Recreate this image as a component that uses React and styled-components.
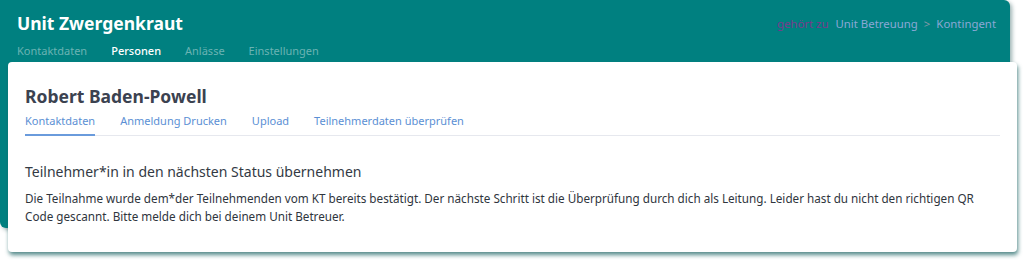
import React from "react";
import styled, { createGlobalStyle } from "styled-components";

const GlobalStyle = createGlobalStyle`
  body {
    margin: 0;
    background: #ffffff;
    font-family: "Noto Sans", "Open Sans", sans-serif;
  }
`;

const Stage = styled.div`
  display: grid;
  grid-template-columns: 8px 1002px 7px;
  grid-template-rows: 62px 166px 24px;
  padding-bottom: 8px;
`;

const UnitPanel = styled.header`
  grid-column: 1 / 3;
  grid-row: 1 / 3;
  background: #008080;
  border-radius: 0 6px 6px 6px;
  box-shadow: 2px 2px 4px rgba(0, 60, 60, 0.4);
  padding: 12px 14px 0 17px;
  display: flex;
  flex-direction: column;
  gap: 9px;
`;

const TopRow = styled.div`
  display: flex;
  align-items: center;
  justify-content: space-between;
`;

const UnitTitle = styled.h1`
  margin: 0;
  color: #ffffff;
  font-size: 17.5px;
  font-weight: 700;
  line-height: 22px;
`;

const Breadcrumb = styled.div`
  display: flex;
  align-items: center;
  gap: 6px;
  font-size: 11.4px;
  color: #8aa8d6;
`;

const Owner = styled.span`
  color: #7a3a8c;
  margin-right: 1px;
`;

const Sep = styled.span`
  color: #8a9aa8;
`;

const UnitTabs = styled.nav`
  display: flex;
  gap: 24px;
`;

const UnitTab = styled.span`
  font-size: 11px;
  line-height: 16px;
  color: ${(p) => (p.$active ? "#ffffff" : "#6ab3b3")};
  font-weight: ${(p) => (p.$active ? 500 : 400)};
`;

const Card = styled.section`
  grid-column: 2 / 4;
  grid-row: 2 / 4;
  background: #ffffff;
  border-radius: 4px;
  box-shadow: 1px 3px 4px rgba(30, 100, 100, 0.75);
  padding: 22px 17px 0 17px;
`;

const PersonName = styled.h2`
  margin: 0;
  color: #3b4250;
  font-size: 17.5px;
  font-weight: 700;
  line-height: 24px;
`;

const PersonTabs = styled.nav`
  display: flex;
  gap: 25px;
  margin-top: 5px;
  border-bottom: 1px solid #e6e8ee;
`;

const PersonTab = styled.span`
  font-size: 11px;
  line-height: 16px;
  color: #5b8fd4;
  padding-bottom: 5px;
  border-bottom: 2px solid ${(p) => (p.$active ? "#6a9bdc" : "transparent")};
  margin-bottom: -1px;
`;

const StatusTitle = styled.h3`
  margin: 26px 0 0;
  font-size: 14px;
  font-weight: 400;
  line-height: 20px;
  color: #333a44;
`;

const StatusText = styled.p`
  margin: 7px 0 0;
  font-size: 11.7px;
  line-height: 18px;
  color: #2f353d;
  max-width: 975px;
`;

const App = () => {
  const unitTabs = ["Kontaktdaten", "Personen", "Anlässe", "Einstellungen"];
  const personTabs = [
    "Kontaktdaten",
    "Anmeldung Drucken",
    "Upload",
    "Teilnehmerdaten überprüfen",
  ];

  return (
    <>
      <GlobalStyle />
      <Stage>
        <UnitPanel>
          <TopRow>
            <UnitTitle>Unit Zwergenkraut</UnitTitle>
            <Breadcrumb>
              <Owner>gehört zu</Owner>
              <span>Unit Betreuung</span>
              <Sep>&gt;</Sep>
              <span>Kontingent</span>
            </Breadcrumb>
          </TopRow>
          <UnitTabs>
            {unitTabs.map((t) => (
              <UnitTab key={t} $active={t === "Personen"}>
                {t}
              </UnitTab>
            ))}
          </UnitTabs>
        </UnitPanel>
        <Card>
          <PersonName>Robert Baden-Powell</PersonName>
          <PersonTabs>
            {personTabs.map((t, i) => (
              <PersonTab key={t} $active={i === 0}>
                {t}
              </PersonTab>
            ))}
          </PersonTabs>
          <StatusTitle>Teilnehmer*in in den nächsten Status übernehmen</StatusTitle>
          <StatusText>
            Die Teilnahme wurde dem*der Teilnehmenden vom KT bereits bestätigt. Der nächste
            Schritt ist die Überprüfung durch dich als Leitung. Leider hast du nicht den
            richtigen QR Code gescannt. Bitte melde dich bei deinem Unit Betreuer.
          </StatusText>
        </Card>
      </Stage>
    </>
  );
};

export default App;
